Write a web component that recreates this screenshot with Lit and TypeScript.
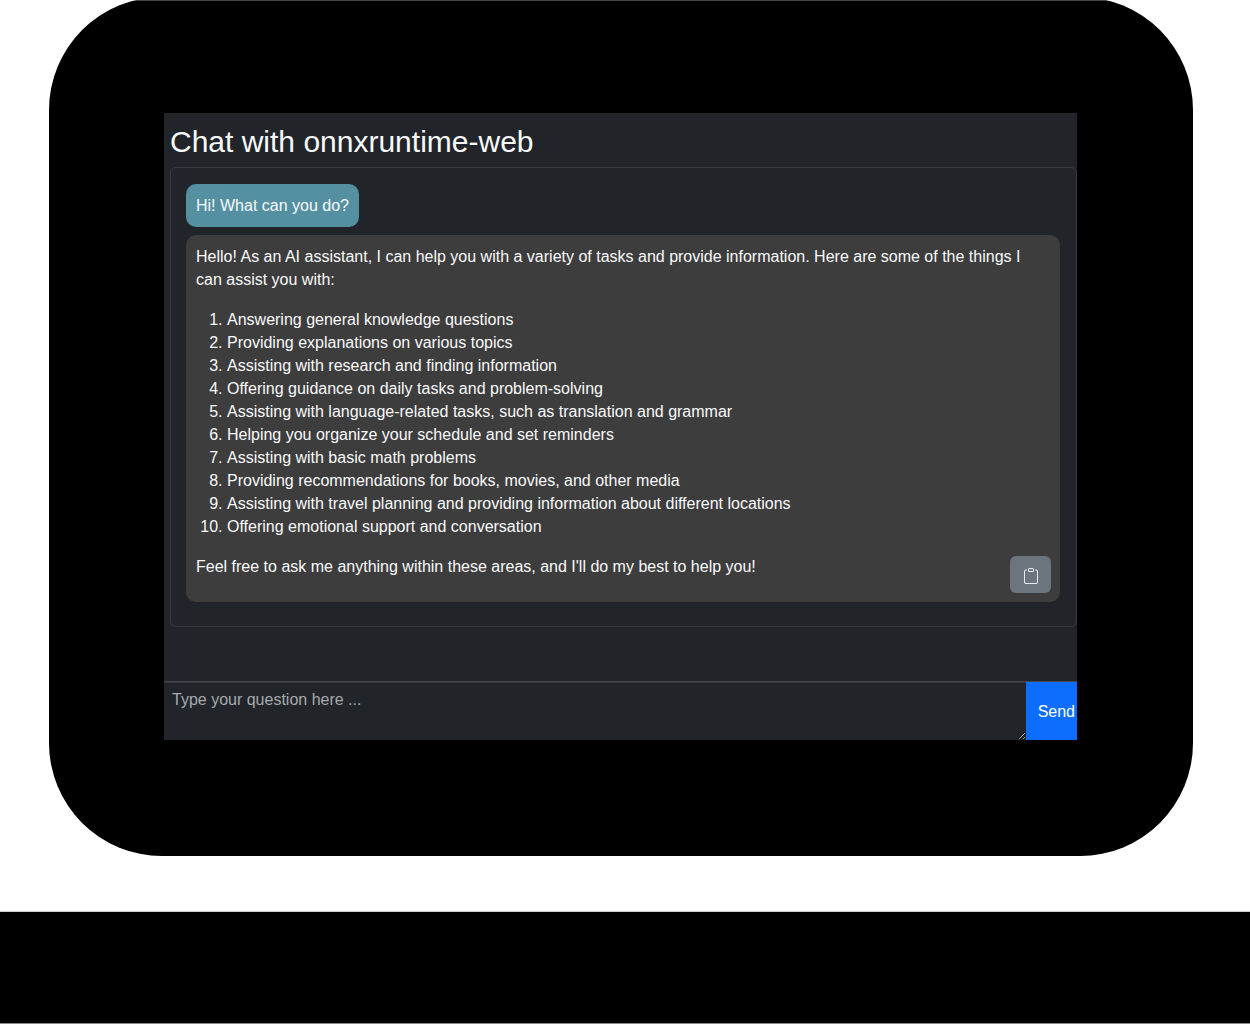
import { LitElement, html, css } from "lit";
import { customElement, state } from "lit/decorators.js";

@customElement("clipboard-icon")
export class ClipboardIcon extends LitElement {
  static styles = css`
    :host {
      display: block;
      width: 16px;
      height: 16px;
    }
    .glyph {
      display: block;
      width: 100%;
      height: 100%;
      fill: currentColor;
    }
  `;

  render() {
    return html`<svg class="glyph" viewBox="0 0 16 16" aria-hidden="true">
      <path
        d="M4 1.5H3a2 2 0 0 0-2 2V14a2 2 0 0 0 2 2h10a2 2 0 0 0 2-2V3.5a2 2 0 0 0-2-2h-1v1h1a1 1 0 0 1 1 1V14a1 1 0 0 1-1 1H3a1 1 0 0 1-1-1V3.5a1 1 0 0 1 1-1h1v-1z"
      />
      <path
        d="M9.5 1a.5.5 0 0 1 .5.5v1a.5.5 0 0 1-.5.5h-3a.5.5 0 0 1-.5-.5v-1a.5.5 0 0 1 .5-.5h3zm-3-1A1.5 1.5 0 0 0 5 1.5v1A1.5 1.5 0 0 0 6.5 4h3A1.5 1.5 0 0 0 11 2.5v-1A1.5 1.5 0 0 0 9.5 0h-3z"
      />
    </svg>`;
  }
}

@customElement("app-root")
export class AppRoot extends LitElement {
  static styles = css`
    :host {
      display: block;
      background: #fff;
      font-family: "Liberation Sans", Arial, sans-serif;
      font-size: 16px;
      line-height: 23px;
      color: #f8f9fa;
    }
    * {
      box-sizing: border-box;
    }
    .page {
      display: flex;
      flex-direction: column;
      min-height: 100vh;
      overflow: hidden;
    }
    .frame {
      margin: -3px 57px 55px 49px;
      padding: 116px 116px 116px 115px;
      border-radius: 113px;
      background: linear-gradient(#444 4px, #000 4px);
    }
    .screen {
      display: flex;
      flex-direction: column;
      background: #212529;
    }
    .title {
      margin: 0;
      padding: 11px 6px 7px;
      font-size: 30px;
      line-height: 36px;
      font-weight: 400;
    }
    .history {
      display: flex;
      flex-direction: column;
      align-items: flex-start;
      gap: 8px;
      margin: 0 0 54px 6px;
      padding: 16px 16px 24px 15px;
      border: 1px solid #373b3f;
      border-radius: 6px;
    }
    .bubble {
      padding: 10px;
      border-radius: 10px;
    }
    .question {
      background: #5590a2;
    }
    .answer {
      position: relative;
      align-self: stretch;
      padding-right: 30px;
      background: #3d3d3d;
    }
    .text {
      margin: 0;
    }
    .closing {
      margin-bottom: 14px;
    }
    .abilities {
      margin: 17px 0;
      padding-left: 31px;
    }
    .copy {
      position: absolute;
      right: 9px;
      bottom: 9px;
      display: grid;
      place-items: center;
      width: 41px;
      height: 37px;
      padding: 2px 0 0;
      border: 0;
      border-radius: 6px;
      background: #6c757d;
      color: #e9ecef;
      cursor: pointer;
    }
    .composer {
      display: flex;
      align-items: stretch;
      border-top: 1px solid #45494d;
    }
    .prompt {
      flex: 1;
      min-width: 0;
      height: 58px;
      margin: 0;
      padding: 5px 8px;
      border: 0;
      border-top: 1px solid #34383c;
      outline: 0;
      background: #212529;
      color: #dee2e6;
      font: inherit;
      resize: vertical;
    }
    .prompt::placeholder {
      color: #a6a9ac;
      opacity: 1;
    }
    .send {
      padding: 0 2px 0 12px;
      border: 0;
      background: #0d6efd;
      color: #fff;
      font: inherit;
      cursor: pointer;
    }
    .base {
      flex: 1;
      min-height: 112px;
      border-top: 1px solid #ccc;
      border-bottom: 1px solid #888;
      background: #000;
    }
  `;

  @state() private draft = "";

  private readonly abilities = [
    "Answering general knowledge questions",
    "Providing explanations on various topics",
    "Assisting with research and finding information",
    "Offering guidance on daily tasks and problem-solving",
    "Assisting with language-related tasks, such as translation and grammar",
    "Helping you organize your schedule and set reminders",
    "Assisting with basic math problems",
    "Providing recommendations for books, movies, and other media",
    "Assisting with travel planning and providing information about different locations",
    "Offering emotional support and conversation",
  ];

  private onInput(event: Event) {
    this.draft = (event.target as HTMLTextAreaElement).value;
  }

  private onSubmit(event: Event) {
    event.preventDefault();
    this.draft = "";
  }

  render() {
    return html`
      <div class="page">
        <div class="frame">
          <main class="screen">
            <h1 class="title">Chat with onnxruntime-web</h1>
            <section class="history">
              <div class="bubble question">Hi! What can you do?</div>
              <div class="bubble answer">
                <p class="text">
                  Hello! As an AI assistant, I can help you with a variety of tasks and provide
                  information. Here are some of the things I can assist you with:
                </p>
                <ol class="abilities">
                  ${this.abilities.map((item) => html`<li>${item}</li>`)}
                </ol>
                <p class="text closing">
                  Feel free to ask me anything within these areas, and I'll do my best to help you!
                </p>
                <button class="copy" type="button" aria-label="Copy">
                  <clipboard-icon></clipboard-icon>
                </button>
              </div>
            </section>
            <form class="composer" @submit=${this.onSubmit}>
              <textarea
                class="prompt"
                aria-label="Question"
                placeholder="Type your question here ..."
                .value=${this.draft}
                @input=${this.onInput}
              ></textarea>
              <button class="send" type="submit">Send</button>
            </form>
          </main>
        </div>
        <footer class="base"></footer>
      </div>
    `;
  }
}
